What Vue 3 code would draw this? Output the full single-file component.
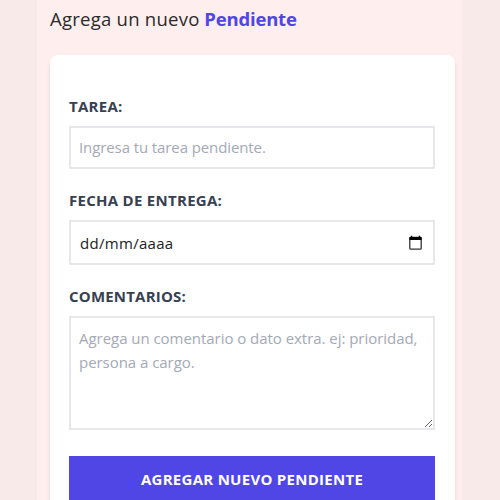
<script setup>
import { ref } from 'vue'
const task = ref('')
const comment = ref('')
</script>

<template>
  <div class="page">
    <main class="panel">
      <p class="intro"><span class="lead">Agrega un nuevo</span> <strong>Pendiente</strong></p>
      <form class="card" @submit.prevent>
        <label class="label l1" for="task"><span>Tarea:</span></label>
        <input id="task" v-model="task" class="field text" type="text" placeholder="Ingresa tu tarea pendiente." />
        <label class="label l2"><span>Fecha de entrega:</span></label>
        <div class="field date">
          <span>dd/mm/aaaa</span>
          <svg width="15" height="16" viewBox="0 0 15 16">
            <path d="M3.5 0.7V3M11.5 0.7V3" stroke="#000" stroke-width="1.5" />
            <rect x="1.8" y="2.3" width="11.4" height="11.9" rx="1" fill="none" stroke="#333" stroke-width="1.3" />
            <path d="M1.5 2h12v3H1.5z" fill="#000" />
          </svg>
        </div>
        <label class="label l3" for="comment"><span>Comentarios:</span></label>
        <textarea id="comment" v-model="comment" class="field area" placeholder="Agrega un comentario o dato extra. ej: prioridad, persona a cargo."></textarea>
        <button class="submit"><span>Agregar nuevo pendiente</span></button>
      </form>
    </main>
  </div>
</template>

<style>
body { margin: 0; overflow: hidden; }
</style>
<style scoped>
* { box-sizing: border-box; }
.page {
  height: 500px;
  overflow: hidden;
  display: flex;
  padding: 0 38px 0 37px;
  background: #f8eae8;
  font-family: "Open Sans", "Noto Sans", sans-serif;
}
.panel { width: 425px; height: 560px; padding: 5px 7px 0 13px; background: #feeeed; }
.intro { margin: 0; height: 50px; font-size: 18.5px; line-height: 27px; color: #2a2a2a; white-space: nowrap; }
.lead { letter-spacing: 0.25px; }
.intro strong { color: #4f46e5; font-weight: 700; letter-spacing: -0.2px; }
.card {
  display: flex;
  flex-direction: column;
  height: 480px;
  padding: 40px 20px 0 19px;
  background: #fff;
  border-radius: 8px;
  box-shadow: 0 4px 6px -1px rgba(0, 0, 0, 0.1), 0 2px 4px -2px rgba(0, 0, 0, 0.1);
}
.label {
  height: 24px;
  font-size: 15px;
  line-height: 23px;
  letter-spacing: 0.28px;
  font-weight: 700;
  color: #374151;
  text-transform: uppercase;
  white-space: nowrap;
}
.l3 span { letter-spacing: 0.2px; }
.field {
  width: 366px;
  flex: none;
  margin: 7px 0 0;
  border: 2px solid #e5e7eb;
  border-radius: 0;
  background: #fff;
  padding: 0 8px;
  font: 15px/24px "Open Sans", "Noto Sans", sans-serif;
  letter-spacing: -0.04px;
  color: #222;
  outline: none;
}
.field::placeholder { color: #a3a9b6; opacity: 1; }
.text { height: 43px; padding-bottom: 2px; letter-spacing: -0.1px; }
.l2 { margin-top: 20px; }
.date { height: 45px; margin-top: 7px; display: flex; align-items: center; justify-content: space-between; padding-left: 9px; padding-right: 10px; letter-spacing: 0.3px; }
.l3 { margin-top: 20px; }
.area { height: 114px; padding-top: 8px; resize: vertical; }
.submit {
  flex: none;
  width: 366px;
  height: 48px;
  margin-top: 26px;
  padding: 0 0 2px;
  border: 0;
  background: #4f46e5;
  color: #fff;
  font: 700 15px/24px "Open Sans", "Noto Sans", sans-serif;
  letter-spacing: 0.28px;
  text-transform: uppercase;
}
</style>
